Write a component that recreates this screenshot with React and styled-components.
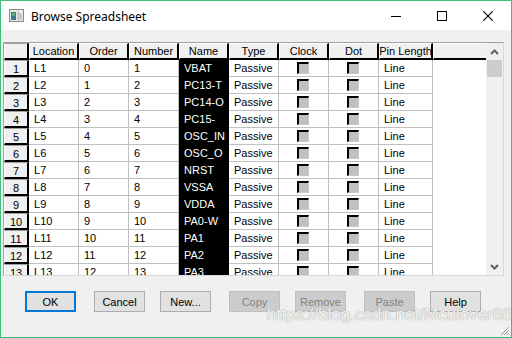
import React from 'react';
import styled, { createGlobalStyle } from 'styled-components';

const GlobalStyle = createGlobalStyle`
  body {
    margin: 0;
    background: #ffffff;
  }
`;

// window chrome
const Window = styled.div`
  position: relative;
  width: 512px;
  height: 338px;
  box-sizing: border-box;
  border: 1px solid #3cc07c;
  display: flex;
  flex-direction: column;
  background: #f0f0f0;
  font-family: "Liberation Sans", Arial, sans-serif;
  overflow: hidden;
`;

const TitleBar = styled.div`
  height: 29px;
  background: #ffffff;
  display: flex;
  align-items: center;
  padding-left: 8px;
`;

const TitleText = styled.span`
  font-family: "Noto Sans", sans-serif;
  font-size: 12px;
  color: #000;
  margin-left: 7px;
  margin-top: 1px;
`;

const Controls = styled.div`
  margin-left: auto;
  display: flex;
  height: 100%;
`;

const ControlButton = styled.div`
  width: 46px;
  height: 100%;
  display: flex;
  align-items: center;
  justify-content: center;
`;

const Body = styled.div`
  flex: 1;
  display: flex;
  flex-direction: column;
  padding: 12px 0 0 2px;
`;

// spreadsheet grid
const GridFrame = styled.div`
  width: 501px;
  height: 234px;
  box-sizing: border-box;
  border-top: 1px solid #a0a0a0;
  border-left: 1px solid #a0a0a0;
  border-right: 1px solid #d8d8d8;
  border-bottom: 1px solid #d8d8d8;
  background: #ffffff;
  display: flex;
  overflow: hidden;
`;

const Sheet = styled.div`
  width: 482px;
  display: flex;
  flex-direction: column;
  overflow: hidden;
`;

const Row = styled.div`
  display: flex;
  flex-shrink: 0;
  height: 17px;
`;

const HeaderCell = styled.div`
  width: ${(p) => p.w}px;
  height: 17px;
  flex-shrink: 0;
  box-sizing: border-box;
  background: #f0f0f0;
  border-top: 1px solid #ffffff;
  border-left: 1px solid #ffffff;
  border-right: ${(p) => (p.open ? 0 : 2)}px solid #000;
  border-bottom: 2px solid #000;
  font-size: 11px;
  color: #000;
  display: flex;
  align-items: center;
  justify-content: center;
  white-space: nowrap;
  overflow: hidden;
`;

const RowHead = styled(HeaderCell)`
  border-top: 1px solid #a0a0a0;
  border-left: 1px solid #ffffff;
  padding-top: 1px;
`;

const Cell = styled.div`
  width: ${(p) => p.w}px;
  height: 17px;
  flex-shrink: 0;
  box-sizing: border-box;
  background: ${(p) => (p.dark ? '#000' : '#fff')};
  color: ${(p) => (p.dark ? '#fff' : '#000')};
  border-right: 1px solid ${(p) => (p.dark ? '#000' : '#c0c0c0')};
  border-bottom: 1px solid ${(p) => (p.dark ? '#000' : '#c0c0c0')};
  font-size: 11px;
  padding-left: ${(p) => (p.center ? 0 : 5)}px;
  display: flex;
  align-items: center;
  justify-content: ${(p) => (p.center ? 'center' : 'flex-start')};
  white-space: nowrap;
  overflow: hidden;
`;

const Filler = styled.div`
  flex: 1;
  background: #fff;
`;

const Check = styled.span`
  width: 12px;
  height: 12px;
  box-sizing: border-box;
  background: #c0c0c0;
  border-top: 2px solid #000;
  border-left: 2px solid #000;
  border-right: 1px solid #c8c8c8;
  border-bottom: 1px solid #c8c8c8;
  margin-right: 2px;
`;

const ScrollBar = styled.div`
  width: 17px;
  flex-shrink: 0;
  background: #f0f0f0;
  display: flex;
  flex-direction: column;
`;

const ScrollArrow = styled.div`
  height: 17px;
  display: flex;
  align-items: center;
  justify-content: center;
`;

const Thumb = styled.div`
  height: 17px;
  margin: 0 1px;
  background: #cdcdcd;
`;

const Track = styled.div`
  flex: 1;
`;

// buttons
const ButtonRow = styled.div`
  display: flex;
  gap: 15px;
  margin-top: 15px;
  padding-left: 22px;
`;

const Button = styled.div`
  width: 51px;
  height: 21px;
  flex-shrink: 0;
  box-sizing: border-box;
  border: ${(p) => (p.primary ? '2px solid #0078d7' : '1px solid #adadad')};
  background: ${(p) => (p.disabled ? '#cccccc' : '#e1e1e1')};
  border-color: ${(p) => (p.disabled ? '#bfbfbf' : undefined)};
  color: ${(p) => (p.disabled ? '#838383' : '#000')};
  font-size: 11px;
  display: flex;
  align-items: center;
  justify-content: center;

  &:nth-child(even) {
    margin-left: 3px;
  }
`;

const Watermark = styled.div`
  position: absolute;
  left: 266px;
  top: 304px;
  font-family: "Liberation Sans", Arial, sans-serif;
  font-size: 17px;
  color: rgba(255, 255, 255, 0.85);
  text-shadow: 0 0 1px #a8a8a8, 0 0 1px #a8a8a8;
  white-space: nowrap;
  pointer-events: none;
`;

const Grip = styled.svg`
  position: absolute;
  right: 1px;
  bottom: 1px;
`;

const rows = [
  'VBAT', 'PC13-T', 'PC14-O', 'PC15-', 'OSC_IN', 'OSC_O', 'NRST',
  'VSSA', 'VDDA', 'PA0-W', 'PA1', 'PA2', 'PA3',
];

const columns = ['Location', 'Order', 'Number', 'Name', 'Type', 'Clock', 'Dot'];

function AppIcon() {
  return (
    <svg width="15" height="13" viewBox="0 0 15 13">
      <rect x="0.5" y="0.5" width="14" height="12" fill="#e8e8e8" stroke="#8a8a8a" />
      <rect x="2" y="3" width="5" height="8" fill="#3a7a8c" />
      <rect x="3" y="4" width="3" height="3" fill="#5fb07a" />
      <rect x="8" y="3" width="5" height="8" fill="#c8c8c8" />
      <rect x="11" y="2" width="2" height="2" fill="#ffffff" />
    </svg>
  );
}

export default function App() {
  return (
    <>
      <GlobalStyle />
      <Window>
        <TitleBar>
          <AppIcon />
          <TitleText>Browse Spreadsheet</TitleText>
          <Controls>
            <ControlButton>
              <svg width="10" height="10"><line x1="0" y1="5.5" x2="10" y2="5.5" stroke="#000" /></svg>
            </ControlButton>
            <ControlButton>
              <svg width="10" height="10"><rect x="0.5" y="0.5" width="9" height="9" fill="none" stroke="#000" /></svg>
            </ControlButton>
            <ControlButton>
              <svg width="10" height="10"><path d="M0 0L10 10M10 0L0 10" stroke="#000" strokeWidth="1.1" /></svg>
            </ControlButton>
          </Controls>
        </TitleBar>
        <Body>
          <GridFrame>
            <Sheet>
              <Row>
                <RowHead w={25} />
                {columns.map((c) => (
                  <HeaderCell key={c} w={50}>{c}</HeaderCell>
                ))}
                <HeaderCell w={54}>Pin Length</HeaderCell>
                <HeaderCell w={53} open />
              </Row>
              {rows.map((name, i) => (
                <Row key={i}>
                  <RowHead w={25}>{i + 1}</RowHead>
                  <Cell w={50}>L{i + 1}</Cell>
                  <Cell w={50}>{i}</Cell>
                  <Cell w={50}>{i + 1}</Cell>
                  <Cell w={50} dark>{name}</Cell>
                  <Cell w={50}>Passive</Cell>
                  <Cell w={50} center><Check /></Cell>
                  <Cell w={50} center><Check /></Cell>
                  <Cell w={54}>Line</Cell>
                  <Filler />
                </Row>
              ))}
            </Sheet>
            <ScrollBar>
              <ScrollArrow>
                <svg width="9" height="6"><polyline points="1,5 4.5,1.5 8,5" fill="none" stroke="#606060" strokeWidth="2" /></svg>
              </ScrollArrow>
              <Thumb />
              <Track />
              <ScrollArrow>
                <svg width="9" height="6"><polyline points="1,1 4.5,4.5 8,1" fill="none" stroke="#606060" strokeWidth="2" /></svg>
              </ScrollArrow>
            </ScrollBar>
          </GridFrame>
          <ButtonRow>
            <Button primary>OK</Button>
            <Button>Cancel</Button>
            <Button>New...</Button>
            <Button disabled>Copy</Button>
            <Button disabled>Remove</Button>
            <Button disabled>Paste</Button>
            <Button>Help</Button>
          </ButtonRow>
        </Body>
        <Watermark>https://blog.csdn.net/Mculover666</Watermark>
        <Grip width="11" height="11" viewBox="0 0 11 11">
          <path d="M10 2L2 10M10 5L5 10M10 8L8 10" stroke="#9a9a9a" strokeWidth="1" />
        </Grip>
      </Window>
    </>
  );
}
